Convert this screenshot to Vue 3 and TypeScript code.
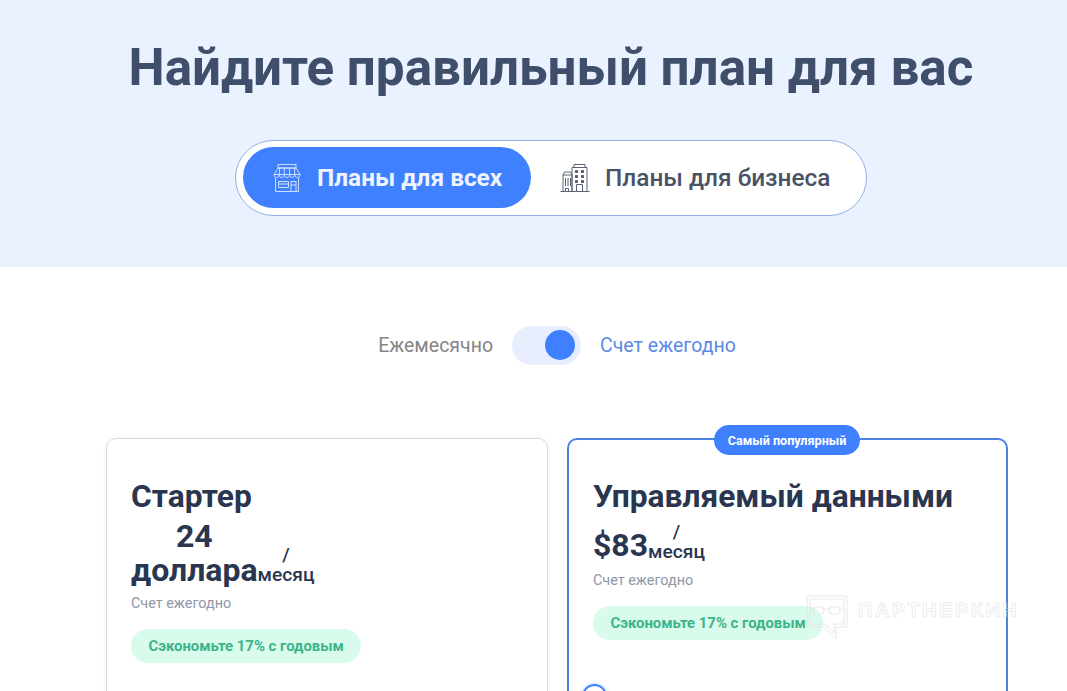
<script setup lang="ts">
import { ref } from "vue";

const yearly = ref(true);

const plans = [
  { id: 0, name: 'Стартер', price: '24 доллара', popular: false },
  { id: 1, name: 'Управляемый данными', price: '$83', popular: true },
];
</script>
<template>
  <div class="page">
    <section class="hero">
      <h1>Найдите правильный план для вас</h1>
      <div class="tabs">
        <button class="tab active">
          <svg width="30" height="30" viewBox="0 0 30 30" fill="none" stroke="#cfe0ff" stroke-width="1">
            <path d="M6 1.500h18v3.500H6z" />
            <path d="M6 5 2 11.500h26L24 5z" />
            <path d="M2 11.500c0 4 5.200 4 5.200 0 0 4 5.200 4 5.200 0 0 4 5.200 4 5.200 0 0 4 5.200 4 5.200 0 0 4 5.200 4 5.200 0" />
            <path d="M7.500 5 7.200 11.500M12.500 5l-.3 6.500M17.500 5l.1 6.500M22.500 5l.3 6.500" />
            <path d="M3.500 15v13.500h23V15" />
            <path d="M6.500 18.500h10v6h-10zM6.500 21h10" />
            <path d="M19 28.500V18.500h5v10M19 22h5" />
          </svg>
          <span>Планы для всех</span>
        </button>
        <button class="tab">
          <svg width="30" height="30" viewBox="0 0 30 30" fill="none" stroke="#5a6274" stroke-width="1">
            <path d="M0.500 28.500h29" />
            <path d="M3 28.500V12h9v16.500M3 12l1.500-3h6l1.500 3" />
            <path d="M5.500 15v8M8 15v8M10.500 15v8" />
            <path d="M5.500 28.500v-3h3v3" />
            <path d="M12 28.500V4.500h15v24M14 4.500V1.500h11v3" />
            <path d="M16.500 21.500v7h6v-7z" />
            <g fill="#5a6274" stroke="none">
              <rect x="15" y="7" width="3" height="3" rx=".5" />
              <rect x="21" y="7" width="3" height="3" rx=".5" />
              <rect x="15" y="12" width="3" height="3" rx=".5" />
              <rect x="21" y="12" width="3" height="3" rx=".5" />
              <rect x="15" y="17" width="3" height="3" rx=".5" />
              <rect x="21" y="17" width="3" height="3" rx=".5" />
            </g>
          </svg>
          <span>Планы для бизнеса</span>
        </button>
      </div>
    </section>

    <div class="billing">
      <span class="monthly">Ежемесячно</span>
      <button class="switch" :class="{ on: yearly }" @click="yearly = !yearly"><i></i></button>
      <span class="annual">Счет ежегодно</span>
    </div>

    <div class="plans">
      <article v-for="plan in plans" :key="plan.id" class="plan" :class="{ popular: plan.popular }">
        <span v-if="plan.popular" class="badge">Самый популярный</span>
        <h2>{{ plan.name }}</h2>
        <div class="price">
          <strong>{{ plan.price }}</strong>
          <span class="unit"><span>/</span><span>месяц</span></span>
        </div>
        <p class="note">Счет ежегодно</p>
        <span class="save">Сэкономьте 17% с годовым</span>
        <div class="feature"><span class="tick"></span></div>
      </article>
    </div>

    <div class="watermark">
      <svg width="42" height="46" viewBox="0 0 42 46" fill="none" stroke="#e6e6e6" stroke-width="1">
        <path d="M1 1h40v31H30v12L18 32H1z" />
        <path d="M4 4h34v25H28v9l-9-9H4z" />
        <rect x="7" y="12" width="11" height="7" rx="3.500" />
        <rect x="23" y="12" width="11" height="7" rx="3.500" />
        <path d="M18 14h5M5 13h2M34 13h3" />
      </svg>
      <span>ПАРТНЕРКИН</span>
    </div>
  </div>
</template>
<style>
html,
body {
  overflow: hidden;
  background: #fff;
}
</style>
<style scoped>
.page {
  position: relative;
  height: 691px;
  overflow: hidden;
  font-family: Roboto, "Noto Sans", sans-serif;
  background: #fff;
}

.hero {
  height: 267px;
  box-sizing: border-box;
  padding: 34px 0 0 35px;
  background: #ebf2ff;
  display: flex;
  flex-direction: column;
  align-items: center;
}
h1 {
  margin: 0;
  font-size: 51.2px;
  line-height: 68px;
  font-weight: 700;
  color: #3f4e6b;
  white-space: nowrap;
}
.tabs {
  margin-top: 38px;
  width: 632px;
  height: 76px;
  box-sizing: border-box;
  padding: 6px 7px;
  display: flex;
  background: #fff;
  border: 1px solid #8fb0e6;
  border-radius: 38px;
}
.tab {
  height: 61px;
  display: flex;
  align-items: center;
  gap: 15px;
  padding: 0 0 0 29px;
  border: none;
  background: none;
  border-radius: 30.5px;
  font-family: inherit;
  font-size: 24.4px;
  font-weight: 500;
  color: #4a5268;
  white-space: nowrap;
}
.tab.active {
  width: 288px;
  flex: none;
  color: #eef4ff;
  font-weight: 700;
  background: #3f80ff;
}

.billing {
  height: 38px;
  margin-top: 59px;
  padding-left: 47px;
  display: flex;
  justify-content: center;
  align-items: center;
  gap: 19px;
  font-size: 19.5px;
}
.monthly {
  color: #858585;
}
.annual {
  color: #5b8ae6;
}
.switch {
  width: 69px;
  height: 39px;
  padding: 0 6px;
  display: flex;
  align-items: center;
  border: none;
  border-radius: 20px;
  background: #e8eefd;
}
.switch.on {
  justify-content: flex-end;
}
.switch i {
  width: 30px;
  height: 30px;
  border-radius: 50%;
  background: #3f80ff;
}

.plans {
  margin: 74px 0 0 106px;
  width: 902px;
  display: grid;
  grid-template-columns: 442px 441px;
  gap: 19px;
}
.plan {
  position: relative;
  height: 500px;
  box-sizing: border-box;
  padding: 40px 24px 0;
  background: #fff;
  border: 1px solid #d8dbe3;
  border-radius: 10px;
  box-shadow: 0 1px 4px rgba(60, 70, 90, 0.1);
}
.plan.popular {
  padding: 39px 24px 0;
  border: 2px solid #4b82dd;
  box-shadow: none;
}
.badge {
  position: absolute;
  top: -15px;
  left: 145px;
  width: 146px;
  height: 30px;
  display: flex;
  align-items: center;
  justify-content: center;
  border-radius: 15px;
  background: #3f80ff;
  color: #fff;
  font-size: 12.6px;
  font-weight: 700;
}
h2 {
  margin: 0;
  font-size: 31.75px;
  line-height: 36px;
  font-weight: 700;
  color: #2a3650;
  white-space: nowrap;
}
.price {
  margin-top: 4px;
  display: flex;
  align-items: flex-end;
  color: #2a3650;
}
.popular .price {
  padding: 3px 0 2px;
}
.price strong {
  width: min-content;
  font-size: 32px;
  line-height: 34px;
  font-weight: 700;
  text-align: center;
}
.unit {
  margin-bottom: 2px;
  display: flex;
  flex-direction: column;
  align-items: center;
  font-size: 19.2px;
  line-height: 20px;
  font-weight: 500;
}
.popular .unit {
  margin-bottom: 0;
}
.note {
  margin: 7px 0 0;
  font-size: 14.4px;
  line-height: 20px;
  color: #8e97a8;
}
.save {
  display: inline-block;
  margin-top: 15px;
  padding: 0 17.500px;
  height: 34px;
  line-height: 34px;
  border-radius: 17px;
  background: #d8fbec;
  color: #3cb48a;
  font-size: 14.9px;
  font-weight: 700;
}
.feature {
  margin-top: 44px;
}
.tick {
  display: block;
  width: 25px;
  height: 25px;
  box-sizing: border-box;
  border: 2px solid #3f80ff;
  border-radius: 50%;
  box-shadow: 0 0 4px rgba(63, 128, 255, 0.4);
  margin-left: -11px;
}

.watermark {
  position: absolute;
  left: 806px;
  top: 595px;
  display: flex;
  align-items: flex-start;
  gap: 10px;
}
.watermark span {
  margin-top: 5px;
  font-family: "Liberation Sans", sans-serif;
  font-size: 20px;
  line-height: 20px;
  font-weight: 700;
  letter-spacing: 2.5px;
  color: transparent;
  -webkit-text-stroke: 0.5px #dcdcdc;
}
</style>
